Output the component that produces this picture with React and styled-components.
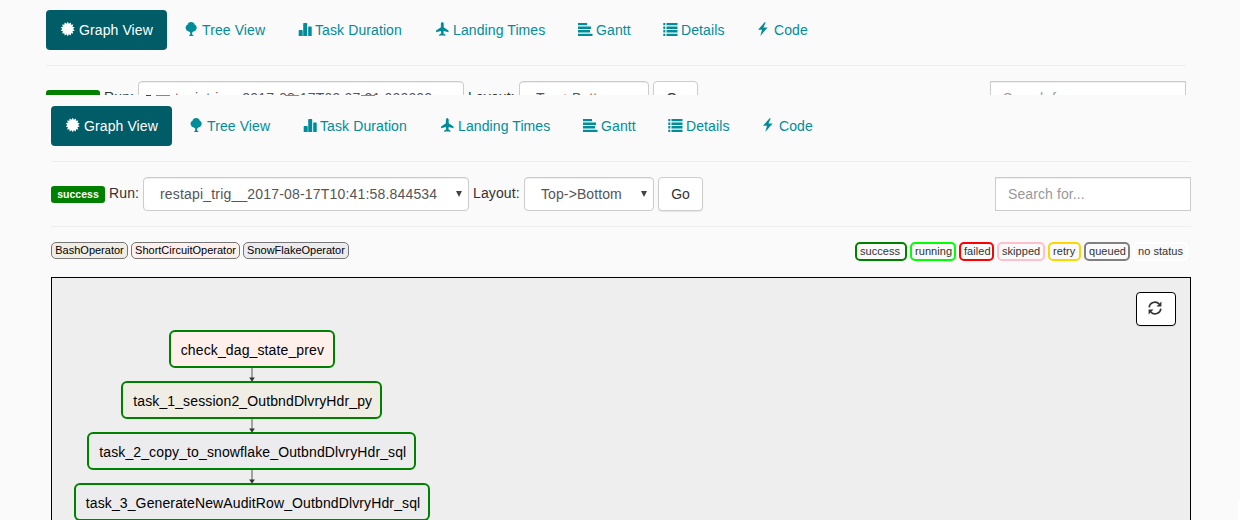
import React from "react";
import styled, { createGlobalStyle } from "styled-components";

const Global = createGlobalStyle`
  * { box-sizing: border-box; }
  body { margin: 0; background: #fafafa; color: #333; font: 14px/20px "Liberation Sans", Arial, sans-serif; overflow: hidden; }
`;
const Screen = styled.div`
  width: 1240px; height: 520px; overflow: hidden; background: #fafafa;
`;
const Strip = styled.section`
  height: ${p => p.$height}px;
  padding: ${p => p.$top}px 0 0 ${p => p.$left}px;
  overflow: hidden;
`;
const Inner = styled.div`width: 1140px;`;
const Nav = styled.nav`display: flex; gap: 2px; height: 40px;`;
const Tab = styled.a`
  display: flex; width: ${p => p.$w}px; height: 40px; padding: 10px 0 10px 15px;
  border-radius: 4px; white-space: pre; line-height: 20px; letter-spacing: .1px;
  color: ${p => (p.$active ? "#fff" : "#008c99")};
  background: ${p => (p.$active ? "#005c66" : "transparent")};
`;
const Glyph = styled.svg`
  width: 14px; height: 14px; margin: 3px ${p => p.$gap}px 0 0; flex: none; fill: currentColor;
`;
const Rule = styled.hr`
  margin: 15px 0; border: 0; height: 1px; background: #eee;
`;
const Controls = styled.div`display: flex; height: 34px; align-items: flex-start;`;
const StateLabel = styled.span`
  width: 54px; height: 17px; margin: 9px 4px 0 0; border-radius: 3px; background: #008000; color: #fff;
  font-weight: 700; font-size: 10.5px; line-height: 17px; text-align: center;
`;
const Caption = styled.span`
  width: ${p => p.$w}px; padding: 6px 0 0 ${p => p.$indent || 0}px; line-height: 20px; white-space: nowrap; letter-spacing: .12px;
`;
const Select = styled.div`
  display: flex; justify-content: space-between; width: ${p => p.$w}px; height: 34px; padding: 6px 6px 6px 16px;
  border: 1px solid #ccc; border-radius: 4px; background: #fff; color: #555; line-height: 21px;
  box-shadow: inset 0 1px 1px rgba(0,0,0,.075); white-space: nowrap; letter-spacing: ${p => p.$track}px;
`;
const Arrow = styled.svg`width: 6px; height: 6px; margin-top: 7px; fill: #444;`;
const Go = styled.button`
  width: 45px; height: 34px; margin-left: 4px; padding: 0; border: 1px solid #ccc; border-radius: 4px;
  background: #fff; color: #333; font: inherit; box-shadow: 0 1px 1px rgba(0,0,0,.08);
`;
const Search = styled.div`
  width: 196px; height: 34px; margin-left: auto; padding: 6px 12px; border: 1px solid #ccc; background: #fff;
  color: #999; box-shadow: inset 0 1px 1px rgba(0,0,0,.075); letter-spacing: .1px;
`;
const Legend = styled.div`display: flex; justify-content: space-between; height: 19px;`;
const Group = styled.div`display: flex; gap: 3px; padding-right: ${p => p.$end || 0}px;`;
const Operator = styled.span`
  width: ${p => p.$w}px; height: 17px; border: 1px solid #777; border-radius: 5px; background: ${p => p.$bg};
  color: #000; font-size: 11px; line-height: 15px; text-align: center; white-space: nowrap;
`;
const Status = styled.span`
  width: ${p => p.$w}px; height: 19px; padding-left: 3px; border: 2px solid ${p => p.$color}; border-radius: 5px;
  font-size: 11px; line-height: 15px; white-space: nowrap; background: #fafafa; letter-spacing: .05px;
`;
const Graph = styled.main`
  position: relative; width: 1140px; height: 260px; margin-top: 16px; padding: 52px 0 0 21px;
  border: 1px solid #000; background: #eee;
`;
const Flow = styled.div`display: flex; flex-direction: column; align-items: center; width: 357.5px;`;
const Node = styled.div`
  width: ${p => p.$w}px; height: 38px; flex: none; padding-left: 10px; border: 2px solid #008000; border-radius: 6px;
  background: ${p => p.$bg}; color: #000; font-size: 14px; line-height: 36px; white-space: nowrap;
  letter-spacing: .12px;
`;
const Edge = styled.svg`width: 8px; height: 13px; flex: none; display: block;`;
const Refresh = styled.button`
  position: absolute; top: 14px; right: 14px; width: 40px; height: 34px; padding: 0 2px 2px 0; border: 1px solid #000;
  border-radius: 4px; background: #fff; color: #333; box-shadow: 0 1px 1px rgba(0,0,0,.08);
  display: flex; align-items: center; justify-content: center;
`;
const Corner = styled.i`position: absolute; left: 1238px; top: 500px; width: 2px; height: 20px; background: #fff;`;
const Dash = styled.i`
  position: absolute; left: ${p => p.$x}px; top: 95px; width: ${p => p.$w}px; height: 1px; background: ${p => p.$c};
`;

const burst = Array.from({ length: 28 }, (_, i) => {
  const r = i % 2 ? 5.3 : 7.2;
  const a = (i * Math.PI) / 14 - Math.PI / 2;
  return `${(6.7 + r * Math.cos(a)).toFixed(2)},${(6 + r * Math.sin(a)).toFixed(2)}`;
}).join(" ");

const art = {
  graph: <polygon points={burst} />,
  tree: <path transform="translate(.6 0)" d="M6.5-.9C8.4-.9 9.8.2 10.2 1.7C11.4 2.2 12.1 3.3 12.1 4.6C12.1 6.6 10.7 8.3 8.8 8.5L7.6 9.4V11.6L9.2 12.9H4.2L5.6 11.6V9.4L4.3 8.5C2.4 8.3 1 6.6 1 4.6C1 3.3 1.7 2.2 2.9 1.7C3.3.2 4.7-.9 6.5-.9Z" />,
  bars: <path transform="translate(.7 0)" d="M.7 7H3.3Q4 7 4 7.7V13H0V7.7Q0 7 .7 7ZM5.2 0H7.8Q8.5 0 8.5 .7V13H4.5V.7Q4.5 0 5.2 0ZM10.2 3.5H12.3Q13 3.5 13 4.2V13H9.5V4.2Q9.5 3.5 10.2 3.5Z" />,
  plane: <path transform="translate(-.7 0)" d="M7-1C7.8-1 8.4 0 8.4 1.1V4.3L13.2 7.6V9.2L8.4 7.9L8.1 10.3L10.1 11.8V12.9L7.5 12.3L7 13.1L6.5 12.3L3.9 12.9V11.8L5.9 10.3L5.6 7.9L.8 9.2V7.6L5.6 4.3V1.1C5.6 0 6.2-1 7-1Z" />,
  gantt: <path d="M0 0H9V2.3H0ZM0 3.6H13V5.9H0ZM0 7.1H12V9.4H0ZM0 10.7H14.5V13H0Z" />,
  list: <path d="M.3 0H2.3V2.3H.3ZM3.5 0H14.5V2.3H3.5ZM.3 3.6H2.3V5.9H.3ZM3.5 3.6H14.5V5.9H3.5ZM.3 7.1H2.3V9.4H.3ZM3.5 7.1H14.5V9.4H3.5ZM.3 10.7H2.3V13H.3ZM3.5 10.7H14.5V13H3.5Z" />,
  bolt: <path d="M8.6-.8L2 6.8H6L4.3 13L11.6 4.6H7.5L9.7-.8Z" />,
};
const tabs = [
  ["Graph View", "graph", 121, 4], ["Tree View", "tree", 112, 4], ["Task Duration", "bars", 136, 3],
  ["Landing Times", "plane", 140, 3], ["Gantt", "gantt", 83, 4], ["Details", "list", 91, 4], ["Code", "bolt", 80, 4],
];
const statuses = [
  ["success", "#008000", 52], ["running", "#00ff00", 46], ["failed", "#ff0000", 35], ["skipped", "#ffc0cb", 48],
  ["retry", "#ffd700", 33], ["queued", "#808080", 46], ["no status", "#fff", 55],
];
const nodes = [
  ["check_dag_state_prev", 166, "#ffefeb"], ["task_1_session2_OutbndDlvryHdr_py", 261, "#f0ede4"],
  ["task_2_copy_to_snowflake_OutbndDlvryHdr_sql", 329, "#ececee"],
  ["task_3_GenerateNewAuditRow_OutbndDlvryHdr_sql", 356, "#ececee"],
];

function Header({ run }) {
  return (
    <>
      <Nav>
        {tabs.map(([name, icon, w, gap], i) => (
          <Tab key={name} $w={w} $active={i === 0}>
            <Glyph $gap={gap} viewBox="0 0 14 14" overflow="visible">{art[icon]}</Glyph>{name}
          </Tab>
        ))}
      </Nav>
      <Rule />
      <Controls>
        <StateLabel>success</StateLabel>
        <Caption $w={34}>Run:</Caption>
        <Select $w={326} $track={0.18}>{run}<Arrow viewBox="0 0 6 6"><path d="M0 0H6L3 6Z" /></Arrow></Select>
        <Caption $w={55} $indent={4}>Layout:</Caption>
        <Select $w={130} $track={0.1}>Top-&gt;Bottom<Arrow viewBox="0 0 6 6"><path d="M0 0H6L3 6Z" /></Arrow></Select>
        <Go>Go</Go>
        <Search>Search for...</Search>
      </Controls>
    </>
  );
}

export default function App() {
  return (
    <Screen>
      <Global />
      <Strip $height={95} $top={10} $left={46}>
        <Inner><Header run="restapi_trig__2017-08-17T09:07:21.000000" /></Inner>
      </Strip>
      <Strip $height={425} $top={11} $left={51}>
        <Inner>
          <Header run="restapi_trig__2017-08-17T10:41:58.844534" />
          <Rule />
          <Legend>
            <Group>
              <Operator $w={77} $bg="#f0ede4">BashOperator</Operator>
              <Operator $w={109} $bg="#ffefeb">ShortCircuitOperator</Operator>
              <Operator $w={106} $bg="#ececee">SnowFlakeOperator</Operator>
            </Group>
            <Group $end={3}>
              {statuses.map(([name, color, w]) => <Status key={name} $w={w} $color={color}>{name}</Status>)}
            </Group>
          </Legend>
          <Graph>
            <Flow>
              {nodes.map(([name, w, bg], i) => (
                <React.Fragment key={name}>
                  {i > 0 && (
                    <Edge viewBox="0 0 8 13"><path d="M4 0V10" stroke="#555" /><path d="M1.2 9.5H6.8L4.5 13H3.5Z" fill="#333" /></Edge>
                  )}
                  <Node $w={w} $bg={bg}>{name}</Node>
                </React.Fragment>
              ))}
            </Flow>
            <Refresh aria-label="Refresh">
              <svg width="14" height="14" viewBox="0 0 14 14" fill="none" stroke="currentColor" strokeWidth="1.7">
                <path d="M1.2 6.4A5.8 5.8 0 0 1 11.2 3M12.8 7.6A5.8 5.8 0 0 1 2.8 11" />
                <path d="M13.4.5V5.4H8.5ZM.6 13.5V8.6H5.5Z" fill="currentColor" stroke="none" />
              </svg>
            </Refresh>
          </Graph>
        </Inner>
      </Strip>
      <Dash $x={146} $w={5} $c="#444" />
      <Dash $x={156} $w={14} $c="#888" />
      <Dash $x={285} $w={14} $c="#888" />
      <Dash $x={361} $w={14} $c="#888" />
      <Corner />
    </Screen>
  );
}
